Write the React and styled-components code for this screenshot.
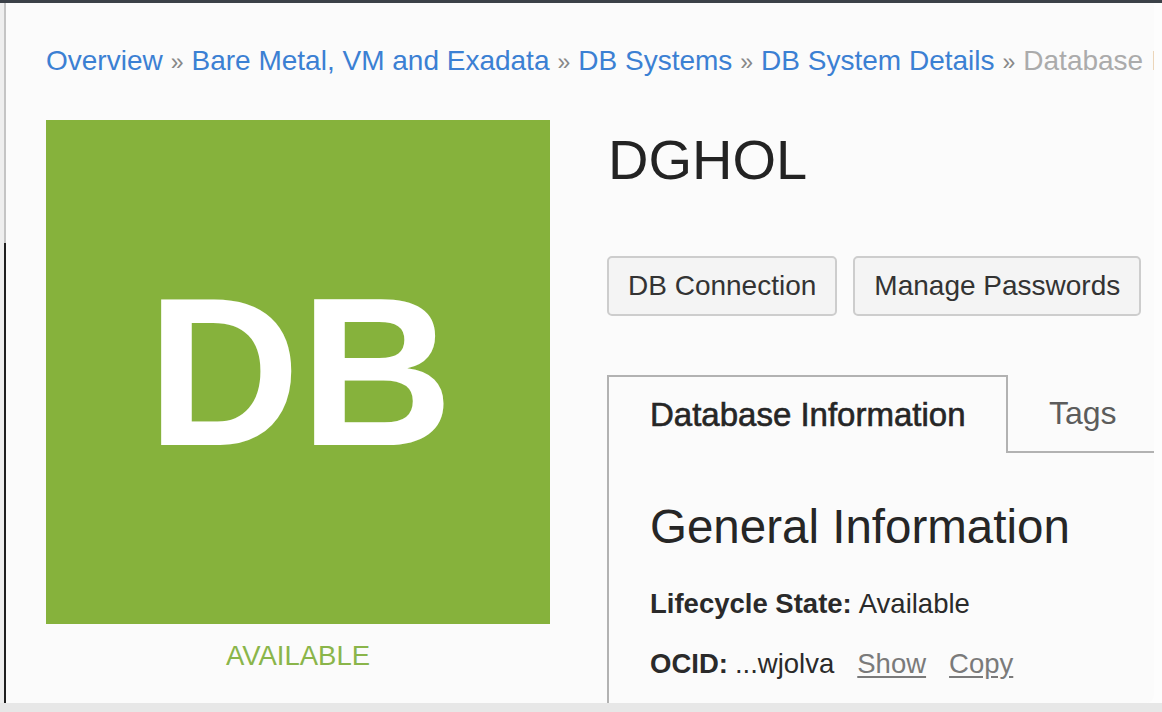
import styled, { createGlobalStyle } from "styled-components";

const GlobalStyle = createGlobalStyle`
  html, body {
    margin: 0;
    padding: 0;
    background: #e7e7e7;
  }
  * {
    box-sizing: border-box;
  }
`;

const Screen = styled.div`
  width: 1162px;
  height: 712px;
  overflow: hidden;
  display: flex;
  flex-direction: column;
  background: #e7e7e7;
  font-family: "Liberation Sans", Arial, sans-serif;
`;

const TopBar = styled.div`
  height: 3px;
  background: #3b4148;
  flex-shrink: 0;
`;

const WindowRow = styled.div`
  display: flex;
  height: 700px;
  flex-shrink: 0;
  background: #fdfdfd;
`;

const LeftEdge = styled.div`
  width: 6px;
  flex-shrink: 0;
  background: linear-gradient(
    to right,
    #eeeeee 0,
    #eeeeee 4px,
    transparent 4px
  );
  position: relative;

  &::after {
    content: "";
    position: absolute;
    left: 4px;
    top: 0;
    bottom: 0;
    width: 2px;
    background: linear-gradient(
      to bottom,
      #c4c4c4 0,
      #c4c4c4 240px,
      #1f1f1f 240px,
      #1f1f1f 100%
    );
  }
`;

const Content = styled.main`
  width: 1148px;
  flex-shrink: 0;
  height: 100%;
  background: #fbfbfb;
  border-bottom-right-radius: 8px;
  overflow: hidden;
  padding: 42px 0 0 40px;
  display: flex;
  flex-direction: column;
`;

const Breadcrumbs = styled.nav`
  height: 32px;
  flex-shrink: 0;
  font-size: 28px;
  line-height: 32px;
  white-space: nowrap;
  overflow: hidden;
  color: #777;
`;

const Crumb = styled.a`
  color: ${({ $current }) => ($current ? "#ababab" : "#3b80d3")};
  text-decoration: none;
`;

const Sep = styled.span`
  color: #888;
  font-size: 23px;
  line-height: 1;
  margin: 0 8px;
`;

const Main = styled.div`
  display: flex;
  flex-shrink: 0;
  gap: 57px;
  margin-top: 43px;
`;

const SideColumn = styled.div`
  width: 504px;
  flex-shrink: 0;
  display: flex;
  flex-direction: column;
  align-items: center;
`;

const BigBadge = styled.div`
  width: 504px;
  height: 504px;
  background: #86b23c;
  color: #ffffff;
  display: flex;
  align-items: center;
  justify-content: center;
  font-weight: 700;
  font-size: 212px;
  line-height: 1;
  padding-left: 4px;
`;

const StateLabel = styled.div`
  margin-top: 16px;
  font-size: 27.5px;
  line-height: 32px;
  color: #8ab54a;
`;

const DetailColumn = styled.div`
  flex: 1;
  display: flex;
  flex-direction: column;
  min-width: 0;
`;

const Title = styled.h1`
  margin: 8px 0 0 1px;
  font-size: 56px;
  line-height: 64px;
  font-weight: 400;
  color: #232323;
`;

const ButtonRow = styled.div`
  display: flex;
  gap: 16px;
  margin-top: 64px;
`;

const Button = styled.button`
  height: 60px;
  padding: 0 19px;
  border: 2px solid #cdcdcd;
  border-radius: 5px;
  background: #f4f4f4;
  font-family: inherit;
  font-size: 28px;
  color: #333;
  cursor: pointer;
`;

const TabBar = styled.div`
  display: flex;
  flex-shrink: 0;
  margin-top: 59px;
  height: 78px;
`;

const Tab = styled.div`
  display: flex;
  align-items: center;
  white-space: nowrap;
  ${({ $active }) =>
    $active
      ? `
    width: 401px;
    padding-left: 41px;
    font-size: 33px;
    border: 2px solid #b2b2b2;
    border-bottom: none;
    color: #262626;
    -webkit-text-stroke: 0.6px #262626;
  `
      : `
    flex: 1;
    padding-left: 41px;
    font-size: 32px;
    border-bottom: 2px solid #b2b2b2;
    color: #5c5c5c;
  `}
`;

const Panel = styled.section`
  flex-shrink: 0;
  border-left: 2px solid #b2b2b2;
  padding: 47px 0 0 41px;
  height: 500px;
`;

const SectionTitle = styled.h2`
  margin: 0;
  font-size: 47.5px;
  line-height: 54px;
  font-weight: 400;
  color: #262626;
`;

const InfoList = styled.div`
  margin-top: 35px;
  display: flex;
  flex-direction: column;
  gap: 30px;
`;

const InfoRow = styled.div`
  font-size: 27.5px;
  line-height: 30px;
  color: #2a2a2a;
  white-space: nowrap;
`;

const Label = styled.b`
  font-weight: 700;
  margin-right: 7px;
`;

const TextLink = styled.a`
  color: #7a7a7a;
  text-decoration: underline;
  text-underline-offset: 3px;
  margin-left: 23px;
`;

const BottomBand = styled.div`
  flex: 1;
  background: #e7e7e7;
`;

const crumbs = [
  "Overview",
  "Bare Metal, VM and Exadata",
  "DB Systems",
  "DB System Details",
];

export default function App() {
  return (
    <>
      <GlobalStyle />
      <Screen>
        <TopBar />
        <WindowRow>
          <LeftEdge />
          <Content>
            <Breadcrumbs>
              {crumbs.map((c) => (
                <span key={c}>
                  <Crumb href="#">{c}</Crumb>
                  <Sep>»</Sep>
                </span>
              ))}
              <Crumb $current>Database Information</Crumb>
            </Breadcrumbs>

            <Main>
              <SideColumn>
                <BigBadge>DB</BigBadge>
                <StateLabel>AVAILABLE</StateLabel>
              </SideColumn>

              <DetailColumn>
                <Title>DGHOL</Title>
                <ButtonRow>
                  <Button>DB Connection</Button>
                  <Button>Manage Passwords</Button>
                </ButtonRow>

                <TabBar>
                  <Tab $active>Database Information</Tab>
                  <Tab>Tags</Tab>
                </TabBar>
                <Panel>
                  <SectionTitle>General Information</SectionTitle>
                  <InfoList>
                    <InfoRow>
                      <Label>Lifecycle State:</Label>Available
                    </InfoRow>
                    <InfoRow>
                      <Label>OCID:</Label>...wjolva
                      <TextLink href="#">Show</TextLink>
                      <TextLink href="#">Copy</TextLink>
                    </InfoRow>
                  </InfoList>
                </Panel>
              </DetailColumn>
            </Main>
          </Content>
        </WindowRow>
        <BottomBand />
      </Screen>
    </>
  );
}
